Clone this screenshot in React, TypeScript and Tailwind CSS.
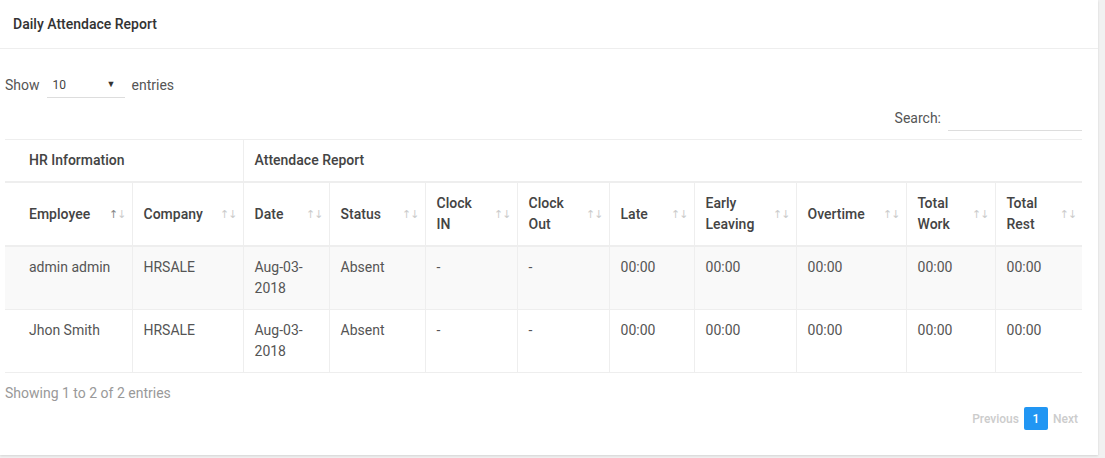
import React from "react";

const cols = [127, 111, 86, 96, 92, 92, 85, 102, 110, 89, 87];

const headers = [
  "Employee",
  "Company",
  "Date",
  "Status",
  "Clock IN",
  "Clock Out",
  "Late",
  "Early Leaving",
  "Overtime",
  "Total Work",
  "Total Rest",
];

const rows = [
  ["admin admin", "HRSALE", "Aug-03-2018", "Absent", "-", "-", "00:00", "00:00", "00:00", "00:00", "00:00"],
  ["Jhon Smith", "HRSALE", "Aug-03-2018", "Absent", "-", "-", "00:00", "00:00", "00:00", "00:00", "00:00"],
];

function SortIcon({ active }: { active?: boolean }) {
  return (
    <span className="absolute right-[6px] top-1/2 -translate-y-1/2 flex text-[11px] leading-none font-normal tracking-[-1px] font-['DejaVu_Sans',sans-serif]">
      <span className={active ? "text-[#888]" : "text-[#ccc]"}>↑</span>
      <span className="text-[#ccc]">↓</span>
    </span>
  );
}

export default function App() {
  return (
    <div className="w-[1105px] h-[458px] bg-[#f1f1f1] font-['Roboto',sans-serif] text-[14px] text-[#555] overflow-hidden">
      <div className="w-[1098px] h-[455px] bg-white shadow-[0_1px_2px_rgba(0,0,0,0.12)]">
        <div className="h-[49px] border-b border-[#eee] flex items-center pl-[13px]">
          <h3 className="text-[14px] font-['Roboto_Medium',Roboto,sans-serif] font-normal text-[#333]">Daily Attendace Report</h3>
        </div>

        <div className="pl-[5px] pr-[16px]">
          <div className="mt-[23px] h-[26px] flex items-center">
            <span>Show</span>
            <div className="ml-[7px] w-[78px] h-[26px] border-b border-[#ddd] flex items-center justify-between pl-[6px] pr-[9px] text-[12px] text-[#444]">
              <span>10</span>
              <span className="text-[9px] text-[#333]">▼</span>
            </div>
            <span className="ml-[7px]">entries</span>
          </div>

          <div className="mt-[7px] h-[26px] flex items-center justify-end">
            <span>Search:</span>
            <div className="ml-[7px] w-[134px] h-[26px] border-b border-[#ddd]" />
          </div>

          <table className="mt-[8px] w-[1077px] table-fixed border-collapse leading-[21px]">
            <colgroup>
              {cols.map((w, i) => (
                <col key={i} style={{ width: w }} />
              ))}
            </colgroup>
            <thead className="text-[#444] font-['Roboto_Medium',Roboto,sans-serif]">
              <tr className="border-t border-[#eee]">
                <th colSpan={2} className="text-left font-normal py-[10px] pl-[24px] border-r border-[#eee]">
                  HR Information
                </th>
                <th colSpan={9} className="text-left font-normal py-[10px] pl-[11px]">
                  Attendace Report
                </th>
              </tr>
              <tr className="border-t-2 border-b-2 border-[#eee]">
                {headers.map((h, i) => (
                  <th
                    key={h}
                    className={`relative text-left font-normal py-[10px] pr-[30px] ${i === 0 ? "pl-[24px]" : "pl-[11px]"} ${i < headers.length - 1 ? "border-r border-[#eee]" : ""}`}
                  >
                    {h}
                    <SortIcon active={i === 0} />
                  </th>
                ))}
              </tr>
            </thead>
            <tbody>
              {rows.map((r, ri) => (
                <tr key={ri} className={`border-b border-[#eee] ${ri === 0 ? "bg-[#f9f9f9]" : "bg-white"}`}>
                  {r.map((c, ci) => (
                    <td
                      key={ci}
                      className={`align-top pt-[10px] pb-[10px] pr-[11px] ${ci === 0 ? "pl-[24px]" : "pl-[11px]"} ${ci < r.length - 1 ? "border-r border-[#eee]" : ""}`}
                    >
                      {c}
                    </td>
                  ))}
                </tr>
              ))}
            </tbody>
          </table>

          <div className="mt-[10px] h-[21px] leading-[21px] text-[#999]">Showing 1 to 2 of 2 entries</div>

          <div className="mt-[3px] flex justify-end items-center gap-[5px] text-[12px] font-['Roboto_Medium',Roboto,sans-serif]">
            <span className="text-[#ccc]">Previous</span>
            <span className="w-[24px] h-[23px] rounded-[2px] bg-[#2196f3] text-white flex items-center justify-center">1</span>
            <span className="text-[#ccc] mr-[4px]">Next</span>
          </div>
        </div>
      </div>
    </div>
  );
}
